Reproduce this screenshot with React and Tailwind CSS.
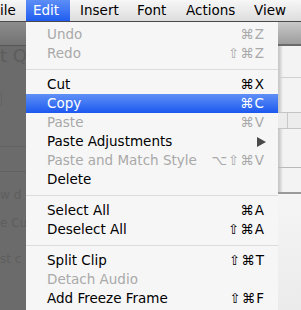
import React from "react";

const items = [
  { label: "Undo", key: "⌘Z", off: true },
  { label: "Redo", key: "⇧⌘Z", off: true },
  { sep: true },
  { label: "Cut", key: "⌘X" },
  { label: "Copy", key: "⌘C", active: true },
  { label: "Paste", key: "⌘V", off: true },
  { label: "Paste Adjustments", sub: true },
  { label: "Paste and Match Style", key: "⌥⇧⌘V", off: true },
  { label: "Delete" },
  { sep: true },
  { label: "Select All", key: "⌘A" },
  { label: "Deselect All", key: "⇧⌘A" },
  { sep: true },
  { label: "Split Clip", key: "⇧⌘T" },
  { label: "Detach Audio", off: true },
  { label: "Add Freeze Frame", key: "⇧⌘F" },
];

function MenuRow({ item }) {
  if (item.sep) {
    return (
      <div className="h-[12px] flex items-start pt-[6px]">
        <div className="h-px w-full bg-[#dcdcdc]" />
      </div>
    );
  }
  const color = item.active
    ? "text-white bg-gradient-to-b from-[#5f8ff6] to-[#1c57ef]"
    : item.off
    ? "text-[#a9a9a9]"
    : "text-black";
  return (
    <div className={`h-[19px] flex items-center justify-between pl-[21px] pr-[13px] ${color}`}>
      <span>{item.label}</span>
      {item.sub ? (
        <svg width="9" height="10" viewBox="0 0 9 10" className="mr-[-1px]">
          <path d="M0 0 L9 5 L0 10 Z" fill="#4a4a4a" />
        </svg>
      ) : (
        <span className="tracking-[1px]">{item.key}</span>
      )}
    </div>
  );
}

export default function App() {
  return (
    <div className="w-[301px] h-[310px] overflow-hidden flex flex-col bg-[#6b6b6b] text-[13.5px] font-['DejaVu_Sans',sans-serif]">
      {/* MENU BAR */}
      <div className="h-[22px] shrink-0 flex items-stretch bg-gradient-to-b from-[#f7f7f7] to-[#dddddd] border-b border-[#4a4a4a] text-black">
        <div className="w-[26px] flex items-center">ile</div>
        <div className="w-[44px] flex items-center pl-[7px] text-white bg-gradient-to-b from-[#5d8ef6] to-[#1f5cf0]">Edit</div>
        <div className="flex items-center pl-[10px] w-[67px]">Insert</div>
        <div className="flex items-center w-[49px]">Font</div>
        <div className="flex items-center w-[68px]">Actions</div>
        <div className="flex items-center">View</div>
      </div>

      <div className="flex flex-1 min-h-0">
        {/* LEFT DIMMED WINDOW */}
        <div className="w-[26px] shrink-0 flex flex-col overflow-hidden text-[#5d5d5d]">
          <div className="h-[24px] bg-gradient-to-b from-[#8c8c8c] to-[#737373] border-b border-[#575757]" />
          <div className="mt-[-2px] text-[18px] leading-[24px] whitespace-nowrap">t Q</div>
          <div className="mt-[20px] ml-[-14px] h-[22px] w-[16px] rounded-full border border-[#646464]" />
          <div className="mt-[36px] h-px bg-[#626262]" />
          <div className="mt-[24px] h-px bg-[#626262]" />
          <div className="mt-[14px] text-[12px] whitespace-nowrap text-[#5e5e5e]">w d</div>
          <div className="mt-[10px] text-[12px] whitespace-nowrap text-[#5e5e5e]">e Cu</div>
          <div className="mt-[18px] text-[12px] whitespace-nowrap text-[#5e5e5e]">st c</div>
        </div>

        {/* DROPDOWN MENU */}
        <div className="w-[252px] shrink-0 bg-[#f6f6f6] pt-[3px] leading-none z-10">
          {items.map((item, i) => (
            <MenuRow key={i} item={item} />
          ))}
        </div>

        {/* RIGHT WINDOW */}
        <div className="flex-1 flex flex-col bg-[#f3f3f3] shadow-[inset_3px_0_3px_rgba(0,0,0,0.18)]">
          <div className="h-[24px] bg-gradient-to-b from-[#c9c9c9] to-[#9d9d9d] border-b-2 border-[#6a6a6a]" />
          <div className="mt-[31px] h-px bg-[#d0d0d0]" />
          <div className="mt-[34px] h-[17px] flex border-y border-[#c4c4c4] bg-[#ececec]">
            <div className="w-[9px]" />
            <div className="w-px bg-[#c8c8c8]" />
          </div>
          <div className="mt-[38px] h-px bg-[#b9b9b9]" />
          <div className="mt-[24px] h-[2px] bg-[#9a9a9a]" />
          <div className="flex-1 bg-gradient-to-b from-[#f5f5f5] to-[#ebebeb]" />
        </div>
      </div>
    </div>
  );
}
